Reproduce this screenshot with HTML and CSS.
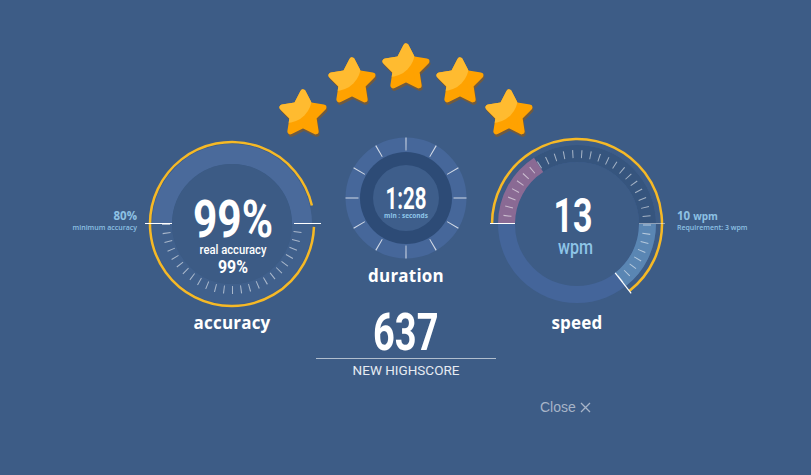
FILE: index.html
```html
<!DOCTYPE html>
<html>
<head>
<meta charset="utf-8">
<title>Results</title>
<link rel="stylesheet" href="styles.css">
</head>
<body>
<div class="page">
  <svg class="stars" width="260" height="95" viewBox="0 0 260 95">
    <defs>
      <path id="starShape" d="M0 -21.5 L6.47 -8.9 L20.45 -6.64 L10.46 3.4 L12.64 17.39 L0 11 L-12.64 17.39 L-10.46 3.4 L-20.45 -6.64 L-6.47 -8.9 Z"/>
      <mask id="starMask" maskUnits="userSpaceOnUse" x="-30" y="-30" width="60" height="60">
        <use href="#starShape" fill="#fff" stroke="#fff" stroke-width="6" stroke-linejoin="round"/>
      </mask>
      <g id="star">
        <use href="#starShape" class="star-shadow" transform="translate(1 2.5)"/>
        <use href="#starShape" class="star-base"/>
        <g mask="url(#starMask)">
          <circle cx="-17" cy="-17" r="26" class="star-light"/>
        </g>
      </g>
    </defs>
    <use href="#star" x="27" y="74"/>
    <use href="#star" x="76" y="42"/>
    <use href="#star" x="130" y="28"/>
    <use href="#star" x="184" y="42"/>
    <use href="#star" x="233" y="74"/>
  </svg>

  <div class="row">
    <div class="side side-left">
      <div class="side-value">80%</div>
      <div class="side-note">minimum accuracy</div>
    </div>

    <div class="gauge gauge-accuracy">
      <svg class="gauge-svg" width="180" height="175" viewBox="0 0 180 175">
        <circle cx="90" cy="89" r="70" class="ring-low"/>
        <path d="M20 89 A70 70 0 0 1 160 89" class="ring-high"/>
        <circle cx="90" cy="89" r="60" class="disk"/>
        <path d="M156 89 A66 66 0 0 1 24 89" pathLength="180" class="ticks"/>
        <path d="M171.95 91.86 A82 82 0 1 1 169.9 70.55" class="gold"/>
        <path d="M3 88.5 H30 M152 88.5 H179" class="hline"/>
        <text x="91" y="102" textLength="80" lengthAdjust="spacingAndGlyphs" class="cond big-num">99%</text>
        <text x="91" y="119" textLength="67" lengthAdjust="spacingAndGlyphs" class="cond sub-label">real accuracy</text>
        <text x="91" y="138" textLength="30" lengthAdjust="spacingAndGlyphs" class="cond sub-num">99%</text>
      </svg>
      <div class="label">accuracy</div>
    </div>

    <div class="gauge gauge-middle">
      <svg class="dur-svg" width="124" height="124" viewBox="0 0 124 124">
        <circle cx="62" cy="62" r="60.5" class="dur-outer"/>
        <circle cx="62" cy="62" r="54" pathLength="360" class="dur-ticks"/>
        <circle cx="62" cy="62" r="46" class="dur-dark"/>
        <circle cx="62" cy="62" r="33" class="dur-inner"/>
        <text x="62" y="73" textLength="41" lengthAdjust="spacingAndGlyphs" class="cond dur-num">1:28</text>
        <text x="62" y="81.5" class="dur-unit">min : seconds</text>
      </svg>
      <div class="label label-dur">duration</div>
      <div class="score">
        <div class="score-line"><span class="score-value cond">637</span></div>
        <div class="score-note">NEW HIGHSCORE</div>
      </div>
    </div>

    <div class="gauge gauge-speed">
      <svg class="gauge-svg" width="180" height="175" viewBox="0 0 180 175">
        <circle cx="90" cy="89" r="70.5" class="sp-low"/>
        <path d="M19.5 89 A70.5 70.5 0 0 1 160.5 89" class="sp-high"/>
        <path d="M19.5 89 A70.5 70.5 0 0 1 51.6 29.87" class="sp-pink"/>
        <path d="M160.5 89 A70.5 70.5 0 0 1 133.41 144.55" class="sp-blue"/>
        <path d="M20 89 A70 70 0 1 1 133.1 144.16" pathLength="232" class="sp-ticks"/>
        <path d="M5 89 A85 85 0 1 1 142.33 155.98" class="gold"/>
        <path d="M128.17 137.86 L144.18 158.34" class="needle"/>
        <path d="M3 88.5 H28" class="hline"/>
        <path d="M152 88.5 H178" class="hline faint"/>
        <text x="86" y="97" textLength="39" lengthAdjust="spacingAndGlyphs" class="cond speed-num">13</text>
        <text x="88.5" y="119" textLength="35" lengthAdjust="spacingAndGlyphs" class="cond speed-unit">wpm</text>
      </svg>
      <div class="label">speed</div>
    </div>

    <div class="side side-right">
      <div class="side-value">10 <span class="side-unit">wpm</span></div>
      <div class="side-note">Requirement: 3 wpm</div>
    </div>
  </div>

  <div class="close-row">
    <span class="close">Close
      <svg class="close-x" width="11" height="11" viewBox="0 0 11 11"><path d="M1 1 L10 10 M10 1 L1 10"/></svg>
    </span>
  </div>
</div>
</body>
</html>
```

FILE: styles.css
```css
html, body {
  margin: 0;
  padding: 0;
}
body {
  background: #3d5c86;
  font-family: "Open Sans", "DejaVu Sans", sans-serif;
  color: #fff;
}
.page {
  width: 811px;
  height: 475px;
  overflow: hidden;
}

/* stars */
.stars {
  display: block;
  margin: 40px auto 0;
  overflow: visible;
}
.star-shadow {
  fill: #9a5a08;
  stroke: #9a5a08;
  stroke-width: 6;
  stroke-linejoin: round;
  opacity: 0.55;
}
.star-base {
  fill: #ffa200;
  stroke: #ffa200;
  stroke-width: 6;
  stroke-linejoin: round;
}
.star-light {
  fill: #ffbb30;
}

/* row of gauges */
.row {
  display: flex;
  align-items: flex-start;
  padding-left: 37px;
}
.cond {
  font-family: "Roboto", "Liberation Sans", sans-serif;
}
.side {
  width: 100px;
  margin-top: 74px;
  color: #8dc1e4;
}
.side-left {
  text-align: right;
}
.side-right {
  margin-left: 10px;
}
.side-value {
  font-size: 11.5px;
  font-weight: 700;
  line-height: 14px;
}
.side-unit {
  font-size: 10px;
}
.side-note {
  font-size: 7px;
  font-weight: 600;
  line-height: 10px;
  white-space: nowrap;
}

.gauge {
  display: flex;
  flex-direction: column;
  align-items: center;
}
.gauge-accuracy {
  width: 180px;
  margin-left: 5px;
}
.gauge-middle {
  width: 140px;
  margin-left: 14px;
}
.gauge-speed {
  width: 180px;
  margin-left: 11px;
}
.gauge-svg {
  display: block;
  overflow: visible;
}
.label {
  margin-top: 2px;
  font-size: 17px;
  font-weight: 700;
  line-height: 22px;
  letter-spacing: 0.2px;
  color: #fff;
}
.label-dur {
  margin-top: 5px;
}

/* accuracy gauge */
.ring-low {
  fill: none;
  stroke: #40608c;
  stroke-width: 20;
}
.ring-high {
  fill: none;
  stroke: #4a6a9b;
  stroke-width: 20;
}
.disk {
  fill: #3c5b85;
}
.ticks {
  fill: none;
  stroke: #fff;
  stroke-opacity: 0.55;
  stroke-width: 8;
  stroke-dasharray: 0.9 6.6;
  stroke-dashoffset: -6.6;
}
.gold {
  fill: none;
  stroke: #f6b926;
  stroke-width: 2.5;
}
.hline {
  stroke: #fff;
  stroke-width: 1;
}
.hline.faint {
  stroke-opacity: 0.45;
}
.big-num {
  font-size: 52px;
  font-weight: 700;
  fill: #fff;
  text-anchor: middle;
}
.sub-label {
  font-size: 13px;
  font-weight: 500;
  fill: #fff;
  text-anchor: middle;
}
.sub-num {
  font-size: 18px;
  font-weight: 700;
  fill: #fff;
  text-anchor: middle;
}

/* duration gauge */
.dur-svg {
  display: block;
  margin-top: 1px;
}
.dur-outer {
  fill: #46679a;
}
.dur-ticks {
  fill: none;
  stroke: #fff;
  stroke-opacity: 0.75;
  stroke-width: 13;
  stroke-dasharray: 1.1 28.9;
  stroke-dashoffset: 0.55;
}
.dur-dark {
  fill: #2d4b76;
}
.dur-inner {
  fill: #3e5e8b;
}
.dur-num {
  font-size: 31px;
  font-weight: 700;
  fill: #fff;
  text-anchor: middle;
}
.dur-unit {
  font-family: "Open Sans", sans-serif;
  font-size: 6.5px;
  font-weight: 700;
  fill: #8ec6ea;
  text-anchor: middle;
}

/* score */
.score {
  width: 180px;
  flex: none;
  margin-top: 20px;
  text-align: center;
}
.score-line {
  height: 51px;
  line-height: 51px;
  border-bottom: 1px solid rgba(255, 255, 255, 0.6);
}
.score-value {
  display: inline-block;
  font-size: 52px;
  font-weight: 700;
  transform: scaleX(0.73);
}
.score-note {
  margin-top: 3px;
  font-family: "Roboto", "Liberation Sans", sans-serif;
  font-size: 13.5px;
  line-height: 16px;
  color: #e6ebf2;
}

/* speed gauge */
.sp-low {
  fill: none;
  stroke: #44659a;
  stroke-width: 17;
}
.sp-high {
  fill: none;
  stroke: #36557e;
  stroke-width: 17;
}
.sp-pink {
  fill: none;
  stroke: #8a6a94;
  stroke-width: 17;
}
.sp-blue {
  fill: none;
  stroke: #5a86b3;
  stroke-width: 17;
}
.sp-ticks {
  fill: none;
  stroke: #fff;
  stroke-opacity: 0.55;
  stroke-width: 8;
  stroke-dasharray: 0.85 6.4;
  stroke-dashoffset: -6.4;
}
.needle {
  stroke: #fff;
  stroke-width: 1.2;
}
.speed-num {
  font-size: 48px;
  font-weight: 700;
  fill: #fff;
  text-anchor: middle;
}
.speed-unit {
  font-size: 20px;
  font-weight: 500;
  fill: #8ec5e8;
  text-anchor: middle;
}

/* close */
.close-row {
  margin-top: 17px;
  padding-left: 540px;
}
.close {
  display: inline-flex;
  align-items: center;
  gap: 4px;
  font-family: "Liberation Sans", Arial, sans-serif;
  font-size: 14px;
  line-height: 18px;
  color: #a7b4c8;
}
.close-x {
  display: block;
  fill: none;
  stroke: #a7b4c8;
  stroke-width: 1.3;
}
```
